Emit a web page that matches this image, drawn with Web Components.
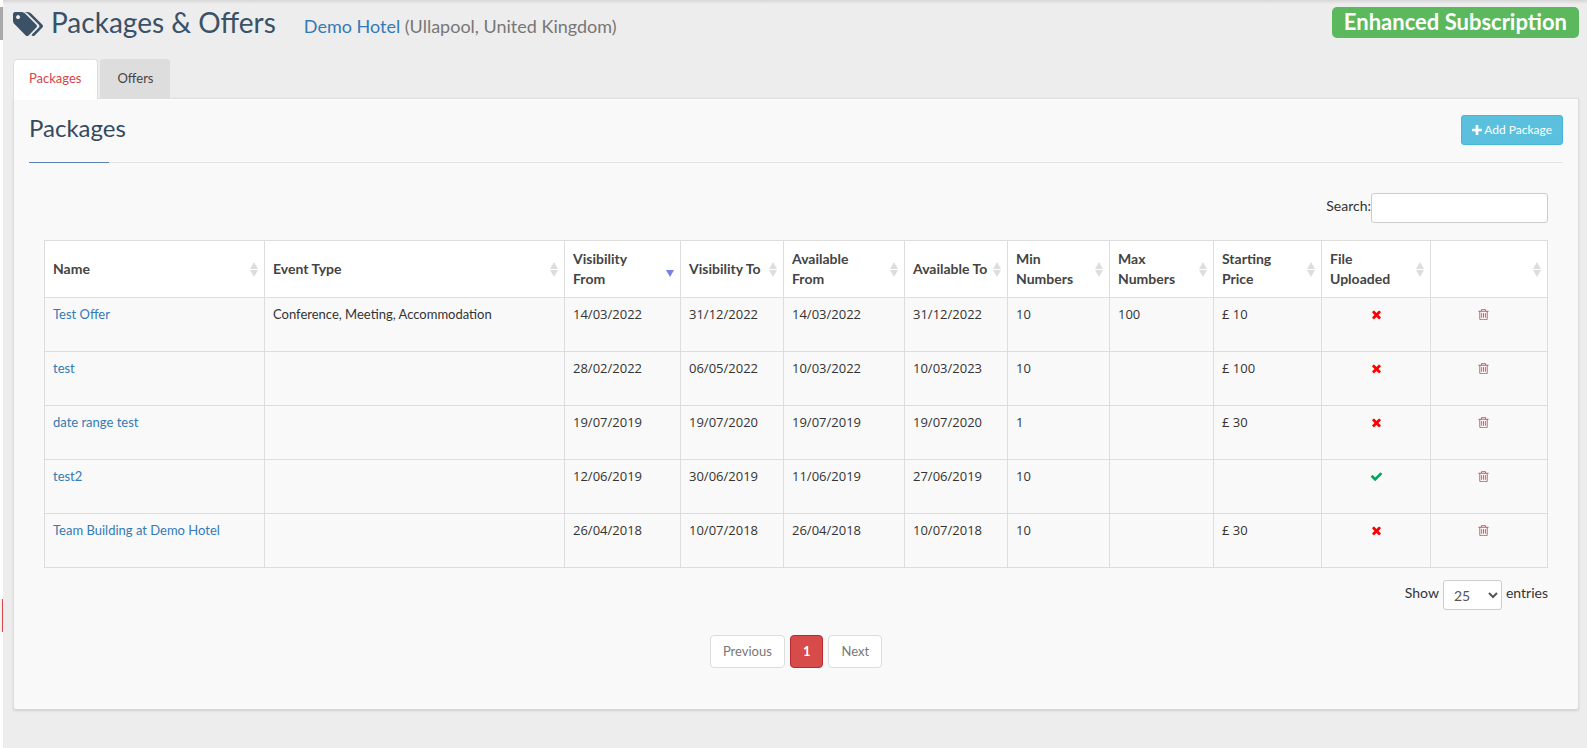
<!DOCTYPE html>
<html lang="en">
<head>
<meta charset="utf-8">
<title>Packages &amp; Offers</title>
<style>
  body { margin: 0; font: 13px/18px Lato, "Open Sans", sans-serif; color: #333; background: #ededed; }
</style>
</head>
<body>
<app-shell>
  <page-header slot="header" heading="Packages &amp; Offers" hotel="Demo Hotel" place="(Ullapool, United Kingdom)" plan="Enhanced Subscription"></page-header>
  <tab-strip slot="tabs" items="Packages,Offers"></tab-strip>
  <content-panel heading="Packages" action="Add Package">
    <table-search></table-search>
    <package-table></package-table>
    <page-length></page-length>
    <page-nav></page-nav>
  </content-panel>
</app-shell>

<script>
const define = (name, render) => customElements.define(name, class extends HTMLElement {
  connectedCallback() {
    if (this.shadowRoot) return;
    this.attachShadow({ mode: 'open' }).innerHTML = render(this);
  }
});

const ICONS = {
  tags: ['0 128 1899 1515', 'M448 448q0-53-37.5-90.5t-90.5-37.5-90.5 37.5-37.5 90.5 37.5 90.5 90.5 37.5 90.5-37.5 37.5-90.5zm1067 576q0 53-37 90l-491 492q-39 37-91 37-53 0-90-37l-715-716q-38-37-64.5-101t-26.5-117v-416q0-52 38-90t90-38h416q53 0 117 26.5t102 64.5l715 714q37 39 37 91zm384 0q0 53-37 90l-491 492q-39 37-91 37-36 0-59-14t-53-45l470-470q37-37 37-90 0-52-37-91l-715-714q-38-38-102-64.5t-117-26.5h224q53 0 117 26.5t102 64.5l715 714q37 39 37 91z'],
  trash: ['0 0 1792 1792', 'M704 736v576q0 14-9 23t-23 9h-64q-14 0-23-9t-9-23v-576q0-14 9-23t23-9h64q14 0 23 9t9 23zm256 0v576q0 14-9 23t-23 9h-64q-14 0-23-9t-9-23v-576q0-14 9-23t23-9h64q14 0 23 9t9 23zm256 0v576q0 14-9 23t-23 9h-64q-14 0-23-9t-9-23v-576q0-14 9-23t23-9h64q14 0 23 9t9 23zm128 724v-948h-896v948q0 22 7 40.5t14.5 27 10.5 8.5h832q3 0 10.5-8.5t14.5-27 7-40.5zm-672-1076h448l-48-117q-7-9-17-11h-317q-10 2-17 11zm928 32v64q0 14-9 23t-23 9h-96v948q0 83-47 143.5t-113 60.5h-832q-66 0-113-58.5t-47-141.5v-952h-96q-14 0-23-9t-9-23v-64q0-14 9-23t23-9h309l70-167q15-37 54-63t79-26h320q40 0 79 26t54 63l70 167h309q14 0 23 9t9 23z'],
  times: ['0 0 1792 1792', 'M1490 1322q0 40-28 68l-136 136q-28 28-68 28t-68-28l-294-294-294 294q-28 28-68 28t-68-28l-136-136q-28-28-28-68t28-68l294-294-294-294q-28-28-28-68t28-68l136-136q28-28 68-28t68 28l294 294 294-294q28-28 68-28t68 28l136 136q28 28 28 68t-28 68l-294 294 294 294q28 28 28 68z'],
  check: ['0 0 1792 1792', 'M1671 566q0 40-28 68l-724 724-136 136q-28 28-68 28t-68-28l-136-136-362-362q-28-28-28-68t28-68l136-136q28-28 68-28t68 28l294 295 656-657q28-28 68-28t68 28l136 136q28 28 28 68z'],
  plus: ['192 128 1408 1408', 'M1600 736v192q0 40-28 68t-68 28h-416v416q0 40-28 68t-68 28h-192q-40 0-68-28t-28-68v-416h-416q-40 0-68-28t-28-68v-192q0-40 28-68t68-28h416v-416q0-40 28-68t68-28h192q40 0 68 28t28 68v416h416q40 0 68 28t28 68z']
};

define('app-icon', el => {
  const [box, path] = ICONS[el.getAttribute('name')];
  return `<style>
    :host { display: inline-block; width: 14px; height: 14px; }
    svg { display: block; width: 100%; height: 100%; fill: currentColor; }
  </style><svg viewBox="${box}" aria-hidden="true"><path d="${path}"/></svg>`;
});

define('app-shell', () => `<style>
    :host { display: grid; grid-template-columns: 3px 1fr; min-height: 100vh; }
    aside { background: #fff; display: flex; flex-direction: column; padding-top: 7px; }
    .thumb { height: 33px; background: #a9a9a9; }
    .current { height: 33px; margin-top: 559px; background: #f1f1f1; border-right: 1px solid #d9474b; }
    main { min-width: 0; padding: 0 8px 32px 10px; background: linear-gradient(#d6d6d6, #ededed 4px); }
  </style>
  <aside><div class="thumb"></div><div class="current"></div></aside>
  <main><slot name="header"></slot><slot name="tabs"></slot><slot></slot></main>`);

define('page-header', el => `<style>
    :host { display: flex; align-items: flex-start; justify-content: space-between; height: 52px; padding-top: 7px; }
    h1 { display: flex; align-items: baseline; margin: 0; font-size: 28px; line-height: 30px; font-weight: 400; color: #3b5166; }
    app-icon { width: 30px; height: 24px; margin-right: 8px; align-self: center; }
    small { margin-left: 28px; font-size: 18px; color: #777; }
    a { color: #337ab7; text-decoration: none; }
    .plan { padding: 0 12px 1px; border-radius: 5px; background: #5cb85c; color: #fff; font-size: 22px; line-height: 30px; font-weight: 700; }
  </style>
  <h1><app-icon name="tags"></app-icon>${el.getAttribute('heading').replace('&', '&amp;')}<small><a href="#hotel">${el.getAttribute('hotel')}</a> ${el.getAttribute('place')}</small></h1>
  <span class="plan">${el.getAttribute('plan')}</span>`);

define('tab-strip', el => `<style>
    :host { display: flex; gap: 2px; margin-bottom: -1px; position: relative; }
    button { box-sizing: border-box; height: 40px; padding: 0 16px 3px; border: 1px solid #ddd; border-bottom: 0; border-radius: 4px 4px 0 0; background: #ddd; color: #444; font: inherit; }
    button[aria-selected=true] { padding-left: 15px; background: #fff; color: #d9434b; }
    button[aria-selected=false] { height: 39px; }
  </style>` + el.getAttribute('items').split(',').map((t, i) => `<button role="tab" aria-selected="${i === 0}">${t}</button>`).join(''));

define('content-panel', el => `<style>
    :host { display: block; padding: 14px 15px 41px; background: #f9f9f9; border: 1px solid #ddd; border-bottom-color: #d8d8d8; border-radius: 0 0 3px 3px; box-shadow: inset 0 1px #fff, 0 1px 2px #d0d0d0; }
    header { display: flex; justify-content: space-between; align-items: flex-start; height: 49px; border-bottom: 1px solid #e3e3e3; }
    h2 { margin: 0; font-size: 24px; line-height: 30px; font-weight: 400; color: #34495e; white-space: nowrap; }
    h2::after { content: ""; display: block; width: 80px; height: 1px; margin-top: 19px; background: #5a82ab; }
    button { display: flex; align-items: center; gap: 2px; height: 30px; margin-top: 2px; padding: 0 10px; border: 1px solid #46b8da; border-radius: 3px; background: #5bc0de; color: #fff; font: inherit; font-size: 12px; }
    app-icon { width: 10px; height: 10px; }
    .body { padding: 30px 15px 0; }
  </style>
  <header><h2>${el.getAttribute('heading')}</h2><button><app-icon name="plus"></app-icon>${el.getAttribute('action')}</button></header>
  <div class="body"><slot></slot></div>`);

define('table-search', () => `<style>
    :host { display: flex; justify-content: flex-end; margin-bottom: 17px; }
    label { font-size: 14px; line-height: 26px; }
    input { box-sizing: border-box; width: 177px; height: 30px; padding: 5px 10px; border: 1px solid #ccc; border-radius: 3px; background: #fff; font: inherit; }
  </style><label for="q">Search:</label><input id="q" type="search">`);

const COLUMNS = [
  ['Name', 220], ['Event Type', 300], ['Visibility<br>From', 116, 'desc'], ['Visibility To', 103],
  ['Available<br>From', 121], ['Available To', 103], ['Min<br>Numbers', 102], ['Max<br>Numbers', 104],
  ['Starting<br>Price', 108], ['File<br>Uploaded', 109], ['', 117]
];
const ROWS = [
  ['Test Offer', 'Conference, Meeting, Accommodation', '14/03/2022', '31/12/2022', '14/03/2022', '31/12/2022', '10', '100', '£ 10', false],
  ['test', '', '28/02/2022', '06/05/2022', '10/03/2022', '10/03/2023', '10', '', '£ 100', false],
  ['date range test', '', '19/07/2019', '19/07/2020', '19/07/2019', '19/07/2020', '1', '', '£ 30', false],
  ['test2', '', '12/06/2019', '30/06/2019', '11/06/2019', '27/06/2019', '10', '', '', true],
  ['Team Building at Demo Hotel', '', '26/04/2018', '10/07/2018', '26/04/2018', '10/07/2018', '10', '', '£ 30', false]
];

define('package-table', () => `<style>
    :host { display: block; }
    table { width: 100%; table-layout: fixed; border-collapse: collapse; }
    th, td { border: 1px solid #ddd; text-align: left; }
    th { padding: 8px 6px 8px 8px; background: #fff; color: #444; font-size: 14px; line-height: 20px; font-weight: 700; vertical-align: middle; white-space: nowrap; }
    .head { display: flex; align-items: center; justify-content: space-between; }
    .head svg { flex: none; width: 8px; height: 15px; fill: #ddd; }
    .head svg.desc { fill: #7b7fe0; }
    td { height: 38px; padding: 7px 8px 8px; vertical-align: top; }
    td.num { font-family: "Open Sans", sans-serif; }
    td.mark { text-align: center; }
    td.remove { padding-right: 20px; }
    td a { color: #337ab7; text-decoration: none; }
    td app-icon { width: 13px; height: 13px; vertical-align: -2px; }
    .no { color: #f00; }
    .yes { color: #00a65a; }
    button { padding: 0; border: 0; background: none; color: #cf5560; font: inherit; }
  </style>
  <table>
    <colgroup>${COLUMNS.map(c => `<col style="width:${c[1]}px">`).join('')}</colgroup>
    <thead><tr>${COLUMNS.map(([label, , sort]) => `<th scope="col"><div class="head"><span>${label}</span><svg class="${sort || ''}" viewBox="0 0 8 15" aria-hidden="true">${sort ? '' : '<path d="M4 0l4 7H0z"/>'}<path d="M0 8h8l-4 7z"/></svg></div></th>`).join('')}</tr></thead>
    <tbody>${ROWS.map(r => `<tr>
      <td><a href="#package">${r[0]}</a></td><td>${r[1]}</td>
      ${r.slice(2, 9).map(v => `<td class="num">${v}</td>`).join('')}
      <td class="mark"><app-icon name="${r[9] ? 'check' : 'times'}" class="${r[9] ? 'yes' : 'no'}"></app-icon></td>
      <td class="mark remove"><button aria-label="Delete"><app-icon name="trash"></app-icon></button></td>
    </tr>`).join('')}</tbody>
  </table>`);

define('page-length', () => `<style>
    :host { display: flex; justify-content: flex-end; gap: 4px; margin-top: 12px; font-size: 14px; line-height: 26px; }
    select { box-sizing: border-box; width: 59px; height: 30px; padding: 0 6px; border: 1px solid #ccc; border-radius: 3px; background: #fff; color: #555; font: inherit; }
  </style><label for="n">Show</label><select id="n"><option>10</option><option selected>25</option><option>50</option></select><span>entries</span>`);

define('page-nav', () => `<style>
    :host { display: flex; justify-content: center; gap: 5px; margin-top: 25px; }
    button { height: 33px; padding: 0 12px 2px; border: 1px solid #ddd; border-radius: 4px; background: #fff; color: #777; font: inherit; }
    button[aria-current] { border-color: #b52b30; background: #d84b4b; color: #fff; font-weight: 700; }
  </style><button>Previous</button><button aria-current="page">1</button><button>Next</button>`);
</script>
</body>
</html>
